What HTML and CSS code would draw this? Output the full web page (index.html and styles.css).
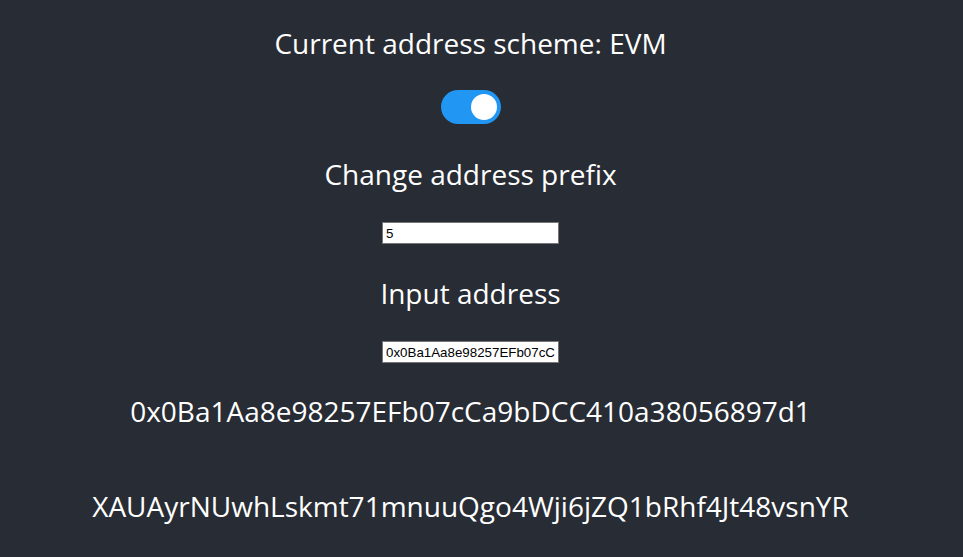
FILE: index.html
```html
<!DOCTYPE html>
<html lang="en">
<head>
<meta charset="utf-8">
<title>Address converter</title>
<link rel="stylesheet" href="styles.css">
</head>
<body>
<div class="app">
  <header class="app-header">
    <p class="line">Current address scheme: EVM</p>
    <label class="switch">
      <input type="checkbox" checked>
      <span class="slider"></span>
    </label>
    <p class="line line-change">Change address prefix</p>
    <input class="field" type="text" value="5">
    <p class="line line-input">Input address</p>
    <input class="field field-addr" type="text" value="0x0Ba1Aa8e98257EFb07cCa9bDCC410a38056897d1">
    <p class="line">0x0Ba1Aa8e98257EFb07cCa9bDCC410a38056897d1</p>
    <p class="line line-ss58">XAUAyrNUwhLskmt71mnuuQgo4Wji6jZQ1bRhf4Jt48vsnYR</p>
  </header>
</div>
</body>
</html>
```
FILE: styles.css
```css
html, body {
  margin: 0;
  padding: 0;
  background: #282c34;
}

.app {
  min-height: 100vh;
  background: #282c34;
}

.app-header {
  width: calc(100% - 22px);
  display: flex;
  flex-direction: column;
  align-items: center;
  gap: 28px;
  padding-top: 23px;
  color: #ffffff;
  font-family: "Open Sans", "Noto Sans", sans-serif;
  font-size: 28px;
}

.line {
  margin: 0;
  line-height: 40px;
  white-space: nowrap;
}

.switch {
  position: relative;
  display: block;
  width: 60px;
  height: 34px;
  margin-top: -1px;
}

.line-change {
  margin-top: 2px;
}

.line-input {
  margin-top: 1px;
}

.field-addr {
  margin-top: 1px;
}

.line-ss58 {
  margin-top: 27px;
}

.switch input {
  opacity: 0;
  width: 0;
  height: 0;
  margin: 0;
}

.slider {
  position: absolute;
  inset: 0;
  background: #2196f3;
  border-radius: 17px;
}

.slider::before {
  content: "";
  position: absolute;
  width: 26px;
  height: 26px;
  left: 30px;
  top: 4px;
  background: #ffffff;
  border-radius: 50%;
}

.field {
  box-sizing: border-box;
  width: 177px;
  height: 22px;
  margin: 0;
  padding: 1px 3px;
  border: 1px solid #767676;
  background: #ffffff;
  color: #000000;
  font-family: "Liberation Sans", Arial, sans-serif;
  font-size: 13.33px;
  outline: none;
}
```
